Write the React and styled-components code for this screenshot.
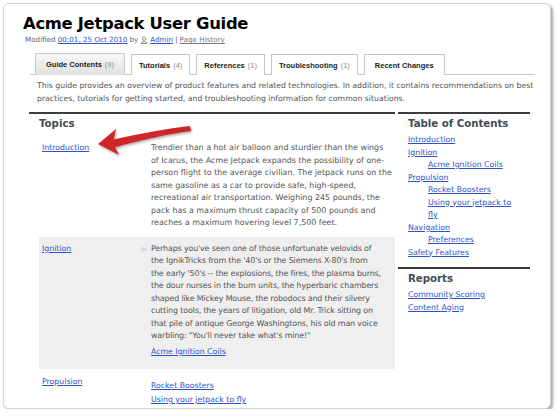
import React from 'react';
import styled, { createGlobalStyle } from 'styled-components';

const GlobalStyle = createGlobalStyle`
  body {
    margin: 0;
    background: #ffffff;
    font-family: "DejaVu Sans", Verdana, sans-serif;
  }
`;

const Frame = styled.div`
  position: relative;
  box-sizing: border-box;
  margin: 3px 0 0 3px;
  width: 548px;
  height: 406px;
  border: 1px solid #d4d4d4;
  border-radius: 6px;
  box-shadow: 2px 2px 3px rgba(0, 0, 0, 0.35);
  background: #fff;
  overflow: hidden;
  padding: 9px 0 0 19px;
`;

const Title = styled.h1`
  margin: 0;
  font-family: "DejaVu Sans", Verdana, sans-serif;
  font-weight: bold;
  font-size: 16.4px;
  line-height: 22px;
  letter-spacing: -0.3px;
  color: #000;
`;

const Meta = styled.div`
  margin: 0 0 0 2px;
  font-size: 7.2px;
  line-height: 10px;
  color: #666;
  display: flex;
  align-items: center;
  gap: 2px;
`;

const MetaLink = styled.a`
  color: ${p => (p.$muted ? '#777' : '#2a55c8')};
  text-decoration: underline;
`;

const TabBar = styled.div`
  display: flex;
  align-items: flex-end;
  gap: 6px;
  margin: 8px 0 0 7px;
  padding-left: 5px;
  width: 500px;
  height: 21px;
  border-bottom: 1px solid #c8c8c8;
`;

const Tab = styled.div`
  box-sizing: border-box;
  height: ${p => (p.$active ? 22 : 21)}px;
  margin-bottom: -1px;
  border: 1px solid #c8c8c8;
  border-bottom: none;
  padding: 0 ${p => p.$pad || 7}px;
  display: flex;
  align-items: center;
  font-family: "Liberation Sans", Arial, sans-serif;
  font-weight: bold;
  font-size: 7.5px;
  color: #222;
  background: ${p => (p.$active ? 'linear-gradient(#f8f8f8, #e0e0e0)' : '#fff')};
`;

const Count = styled.span`
  font-weight: normal;
  color: #888;
  margin-left: 3px;
`;

const Intro = styled.p`
  margin: 4px 0 0 14px;
  width: 500px;
  font-size: 7.75px;
  line-height: 13px;
  color: #555;
`;

const Main = styled.div`
  display: flex;
  margin: 7px 0 0 6px;
  gap: 3px;
`;

const Section = styled.div`
  width: ${p => p.$w}px;
  border-top: 2px solid #3c3c3c;
  padding: ${p => p.$pad};
  margin-top: ${p => p.$mt || 0}px;
  box-sizing: border-box;
`;

const Heading = styled.h2`
  margin: 0 0 ${p => p.$mb || 0}px;
  font-size: 10.2px;
  line-height: 16px;
  font-weight: bold;
  color: #3e4c56;
`;

const TopicRow = styled.div`
  display: grid;
  grid-template-columns: 112px 1fr;
  padding: ${p => p.$pad};
  background: ${p => (p.$shaded ? '#efefef' : 'transparent')};
`;

const TopicLabel = styled.div`
  padding-left: 3px;
`;

const Body = styled.div`
  position: relative;
  font-size: 7.95px;
  line-height: 12.5px;
  color: #555;
  padding-right: 3px;
`;

const Para = styled.p`
  margin: 0;
`;

const Line = styled.span`
  display: block;
  white-space: nowrap;
  letter-spacing: -0.15px;
`;

const Caret = styled.span`
  position: absolute;
  left: -9px;
  top: 0;
  font-size: 6px;
  color: #999;
`;

const Link = styled.a`
  display: block;
  color: #2a55c8;
  text-decoration: underline;
  font-size: 7.8px;
  line-height: ${p => p.$lh || 12.5}px;
  margin-top: ${p => p.$mt || 0}px;
  padding-left: ${p => p.$indent || 0}px;
`;

const Side = styled.div`
  display: flex;
  flex-direction: column;
`;

const Arrow = styled.svg`
  position: absolute;
  left: 90px;
  top: 120px;
  overflow: visible;
`;

function UserIcon() {
  return (
    <svg width="8" height="8" viewBox="0 0 8 8">
      <circle cx="4" cy="2.6" r="1.7" fill="none" stroke="#777" strokeWidth="0.8" />
      <path d="M1 7.5 C1 5 7 5 7 7.5 Z" fill="none" stroke="#777" strokeWidth="0.8" />
    </svg>
  );
}

const ignitionLines = [
  "Perhaps you've seen one of those unfortunate velovids of",
  "the IgnikTricks from the '40's or the Siemens X-80's from",
  "the early '50's -- the explosions, the fires, the plasma burns,",
  'the dour nurses in the burn units, the hyperbaric chambers',
  'shaped like Mickey Mouse, the robodocs and their silvery',
  'cutting tools, the years of litigation, old Mr. Trick sitting on',
  'that pile of antique George Washingtons, his old man voice',
  'warbling: "You\'ll never take what\'s mine!"'
];

export default function App() {
  return (
    <>
      <GlobalStyle />
      <Frame>
        <Title>Acme Jetpack User Guide</Title>
        <Meta>
          Modified <MetaLink>00:01, 25 Oct 2010</MetaLink> by <UserIcon />
          <MetaLink>Admin</MetaLink> | <MetaLink $muted>Page History</MetaLink>
        </Meta>
        <TabBar>
          <Tab $active $pad={10}>Guide Contents<Count>(9)</Count></Tab>
          <Tab>Tutorials<Count>(4)</Count></Tab>
          <Tab>References<Count>(1)</Count></Tab>
          <Tab>Troubleshooting<Count>(1)</Count></Tab>
          <Tab $pad={10}>Recent Changes</Tab>
        </TabBar>
        <Intro>
          This guide provides an overview of product features and related technologies. In addition, it contains
          recommendations on best practices, tutorials for getting started, and troubleshooting information for common
          situations.
        </Intro>
        <Main>
          <Section $w={366} $pad="2px 0 0 10px">
            <Heading>Topics</Heading>
            <TopicRow $pad="10px 0 7px">
              <TopicLabel>
                <Link>Introduction</Link>
              </TopicLabel>
              <Body>
                <Para>
                  Trendier than a hot air balloon and sturdier than the wings of Icarus, the Acme Jetpack expands the
                  possibility of one-person flight to the average civilian. The jetpack runs on the same gasoline as a
                  car to provide safe, high-speed, recreational air transportation. Weighing 245 pounds, the pack has a
                  maximum thrust capacity of 500 pounds and reaches a maximum hovering level 7,500 feet.
                </Para>
              </Body>
            </TopicRow>
            <TopicRow $shaded $pad="6px 0 10px">
              <TopicLabel>
                <Link>Ignition</Link>
              </TopicLabel>
              <Body>
                <Caret>▷</Caret>
                <Para>
                  {ignitionLines.map(line => (
                    <Line key={line}>{line}</Line>
                  ))}
                </Para>
                <Link $mt={3.5}>Acme Ignition Coils</Link>
              </Body>
            </TopicRow>
            <TopicRow $pad="7px 0 0">
              <TopicLabel>
                <Link>Propulsion</Link>
              </TopicLabel>
              <Body>
                <Link $mt={3} $lh={14.5}>Rocket Boosters</Link>
                <Link $lh={14.5}>Using your jetpack to fly</Link>
              </Body>
            </TopicRow>
          </Section>
          <Side>
            <Section $w={132} $pad="2px 10px 0">
              <Heading $mb={2}>Table of Contents</Heading>
              <Link>Introduction</Link>
              <Link>Ignition</Link>
              <Link $indent={20}>Acme Ignition Coils</Link>
              <Link>Propulsion</Link>
              <Link $indent={20}>Rocket Boosters</Link>
              <Link $indent={20}>Using your jetpack to fly</Link>
              <Link>Navigation</Link>
              <Link $indent={20}>Preferences</Link>
              <Link>Safety Features</Link>
            </Section>
            <Section $w={132} $pad="2px 10px 0" $mt={8}>
              <Heading $mb={2}>Reports</Heading>
              <Link>Community Scoring</Link>
              <Link>Content Aging</Link>
            </Section>
          </Side>
        </Main>
        <Arrow width="100" height="40" viewBox="0 0 100 40">
          <defs>
            <filter id="sh" x="-20%" y="-40%" width="140%" height="180%">
              <feDropShadow dx="1" dy="1.5" stdDeviation="1.2" floodColor="#000" floodOpacity="0.35" />
            </filter>
          </defs>
          <g filter="url(#sh)" fill="#cf2629">
            <path d="M17 16 C45 10 75 4 96 2 L97 7 C75 10 45 16 19 24 Z" />
            <path d="M4 20 L22 5 L19 19 L25 31 Z" />
          </g>
        </Arrow>
      </Frame>
    </>
  );
}
